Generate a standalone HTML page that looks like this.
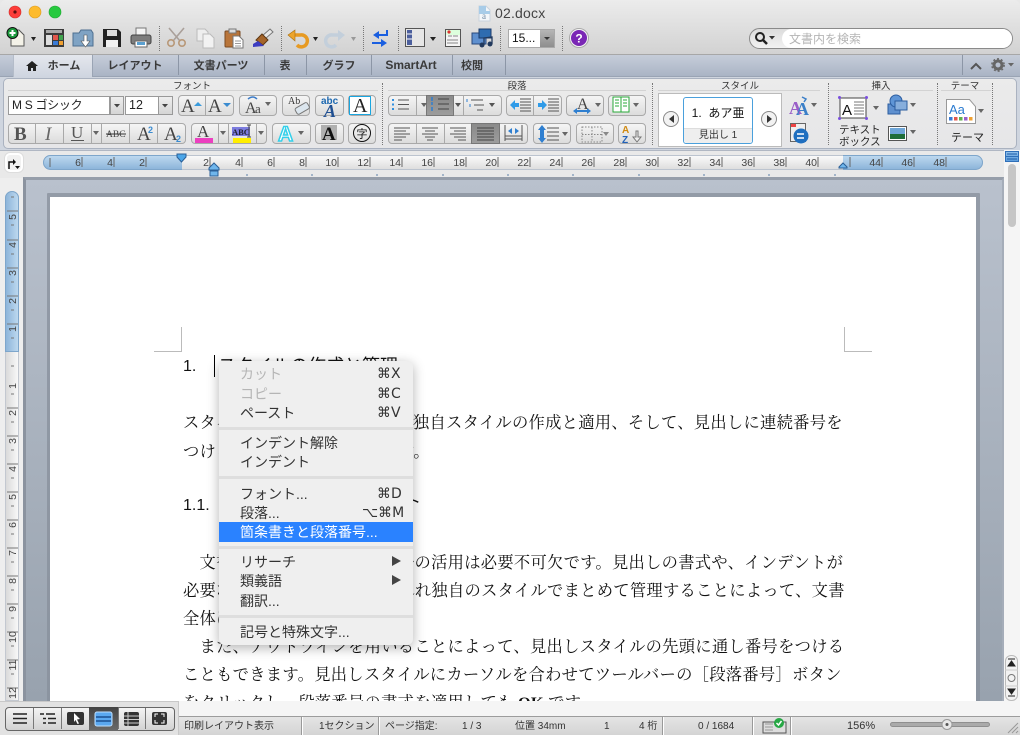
<!DOCTYPE html>
<html lang="ja"><head><meta charset="utf-8"><title>02.docx</title>
<style>
html,body{margin:0;padding:0;background:#fff}
#w{position:relative;width:1020px;height:735px;overflow:hidden;background:#e8e8e8;font-family:"Liberation Sans","Noto Sans CJK JP",sans-serif;color:#333}
#w div{position:absolute;box-sizing:border-box}
.b{background:linear-gradient(#f5f5f5,#dcdcdc);border:1px solid #a9a9a9;border-radius:4px;height:21px}
.d{width:1px;background:#a9a9a9;height:21px}
.dk{background:linear-gradient(#8a8a8a,#9c9c9c);height:21px;border:1px solid #777}
.sep{width:0;border-left:1px dotted #777}
.tab{top:58px;font-size:11px;font-weight:bold;color:#3a3a3a;text-align:center;line-height:15px;white-space:nowrap}
.tv{top:55px;width:1px;height:20px;background:#8c96a6}
.gl{top:81px;font-size:9.5px;color:#333;line-height:12px;text-align:center;white-space:nowrap}
.st{top:719px;font-size:10px;line-height:15px;color:#333;white-space:nowrap}
.sv{top:717px;width:2px;height:18px;background:#fff;border-left:1px solid #999}
.l{left:183px;width:680px;font-family:"Liberation Serif","Noto Serif CJK SC",serif;font-size:16.3px;letter-spacing:.28px;line-height:20px;color:#111;white-space:nowrap}
.m{left:240px;font-size:14px;line-height:18px;color:#333;white-space:nowrap}
.g{color:#b5b5b5}
.k{font-size:14px;line-height:18px;color:#333;white-space:nowrap;font-family:"DejaVu Sans","Liberation Sans",sans-serif}
.ms{left:0;width:194px;height:3px;background:#dedede}
</style></head><body>
<div id="w">
<!-- title and toolbar -->
<div style="left:0;top:0;width:1020px;height:54px;background:linear-gradient(#ececec,#d2d2d2);border-radius:6px 6px 0 0"></div>
<div style="left:495px;top:4px;font-size:14px;line-height:18px;color:#444;letter-spacing:.2px">02.docx</div>
<div class="sep" style="left:159px;top:26px;height:25px"></div>
<div class="sep" style="left:281px;top:26px;height:25px"></div>
<div class="sep" style="left:363px;top:26px;height:25px"></div>
<div class="sep" style="left:398px;top:26px;height:25px"></div>
<div class="sep" style="left:500px;top:26px;height:25px"></div>
<div class="sep" style="left:562px;top:26px;height:25px"></div>
<div style="left:508px;top:29px;width:47px;height:19px;background:#fff;border:1px solid #aaa;font-size:12px;line-height:17px;padding-left:3px;color:#111">15...</div>
<div style="left:540px;top:30px;width:14px;height:17px;background:linear-gradient(#b5b5b5,#8e8e8e)"></div>
<div style="left:749px;top:28px;width:264px;height:21px;border:1px solid #8a8a8a;border-radius:11px;background:linear-gradient(#dcdcdc,#f2f2f2)"></div>
<div style="left:782px;top:29px;width:230px;height:19px;border-radius:10px;background:#fff"></div>
<div style="left:789px;top:31px;font-size:12px;line-height:16px;color:#b5b5b5">文書内を検索</div>

<!-- tabs -->
<div style="left:0;top:54px;width:1020px;height:23px;background:linear-gradient(#c6cdd9,#aab4c5);border-top:1px solid #a7a7a7;border-bottom:1px solid #9aa4b4"></div>
<div style="left:13px;top:55px;width:80px;height:22px;background:linear-gradient(#e4e7ed,#cfd5e0);border-right:1px solid #9aa4b4;border-left:1px solid #b4bcc9"></div>
<div class="tab" style="left:46px;width:36px;top:59px">ホーム</div>
<div class="tab" style="left:105px;width:60px;top:59px">レイアウト</div>
<div class="tab" style="left:190px;width:62px;top:59px">文書パーツ</div>
<div class="tab" style="left:275px;width:20px;top:59px">表</div>
<div class="tab" style="left:322px;width:34px;top:59px">グラフ</div>
<div class="tab" style="left:381px;width:60px;top:58px;font-size:12px">SmartArt</div>
<div class="tab" style="left:460px;width:24px;top:59px">校閲</div>
<div class="tv" style="left:178px"></div><div class="tv" style="left:264px"></div><div class="tv" style="left:306px"></div><div class="tv" style="left:371px"></div><div class="tv" style="left:452px"></div><div class="tv" style="left:505px"></div><div class="tv" style="left:962px"></div>

<!-- ribbon -->
<div style="left:0;top:77px;width:1020px;height:73px;background:#cfd5df"></div>
<div style="left:3px;top:78px;width:1014px;height:71px;border:1px solid #aab2c0;border-radius:5px;background:linear-gradient(#ebebeb,#e6e6e8)"></div>
<div style="left:8px;top:90px;width:370px;height:1px;background:#d3d3d3"></div>
<div style="left:388px;top:90px;width:258px;height:1px;background:#d3d3d3"></div>
<div style="left:658px;top:90px;width:162px;height:1px;background:#d3d3d3"></div>
<div style="left:830px;top:90px;width:103px;height:1px;background:#d3d3d3"></div>
<div style="left:941px;top:90px;width:50px;height:1px;background:#d3d3d3"></div>
<div class="gl" style="left:165px;width:54px">フォント</div>
<div class="gl" style="left:497px;width:40px">段落</div>
<div class="gl" style="left:715px;width:50px">スタイル</div>
<div class="gl" style="left:865px;width:32px">挿入</div>
<div class="gl" style="left:945px;width:40px">テーマ</div>
<div class="sep" style="left:382px;top:83px;height:62px"></div>
<div class="sep" style="left:652px;top:83px;height:62px"></div>
<div class="sep" style="left:828px;top:83px;height:62px"></div>
<div class="sep" style="left:937px;top:83px;height:62px"></div>
<div class="sep" style="left:992px;top:83px;height:62px"></div>

<!-- font group row 1 -->
<div style="left:8px;top:96px;width:102px;height:19px;background:#fff;border:1px solid #999;font-size:12px;line-height:17px;padding-left:3px;color:#222;letter-spacing:-.3px;white-space:nowrap">M S ゴシック</div>
<div style="left:110px;top:96px;width:14px;height:19px;background:linear-gradient(#eee,#d5d5d5);border:1px solid #999"></div>
<div style="left:125px;top:96px;width:34px;height:19px;background:#fff;border:1px solid #999;font-size:12.5px;line-height:17px;padding-left:3px;color:#222">12</div>
<div style="left:158px;top:96px;width:15px;height:19px;background:linear-gradient(#eee,#d5d5d5);border:1px solid #999"></div>
<div class="b" style="left:178px;top:95px;width:56px"></div><div class="d" style="left:205px;top:95px"></div>
<div class="b" style="left:239px;top:95px;width:38px"></div>
<div class="b" style="left:282px;top:95px;width:28px"></div>
<div class="b" style="left:315px;top:95px;width:29px"></div>
<div class="b" style="left:348px;top:95px;width:28px"></div>
<!-- font group row 2 -->
<div class="b" style="left:8px;top:123px;width:178px"></div>
<div class="d" style="left:35px;top:123px"></div><div class="d" style="left:63px;top:123px"></div><div class="d" style="left:91px;top:123px"></div><div class="d" style="left:101px;top:123px"></div><div class="d" style="left:129px;top:123px"></div><div class="d" style="left:157px;top:123px"></div>
<div class="b" style="left:191px;top:123px;width:76px"></div>
<div class="d" style="left:218px;top:123px"></div><div class="d" style="left:228px;top:123px"></div><div class="d" style="left:256px;top:123px"></div>
<div class="b" style="left:272px;top:123px;width:39px"></div>
<div class="b" style="left:315px;top:123px;width:29px"></div>
<div class="b" style="left:348px;top:123px;width:28px"></div>
<!-- paragraph -->
<div class="b" style="left:388px;top:95px;width:114px"></div>
<div class="dk" style="left:426px;top:95px;width:28px"></div>
<div class="d" style="left:416px;top:95px"></div><div class="d" style="left:463px;top:95px"></div>
<div class="b" style="left:506px;top:95px;width:56px"></div><div class="d" style="left:533px;top:95px"></div>
<div class="b" style="left:566px;top:95px;width:38px"></div>
<div class="b" style="left:608px;top:95px;width:38px"></div>
<div class="b" style="left:388px;top:123px;width:140px"></div>
<div class="dk" style="left:471px;top:123px;width:29px"></div>
<div class="d" style="left:416px;top:123px"></div><div class="d" style="left:444px;top:123px"></div>
<div class="b" style="left:533px;top:123px;width:38px"></div>
<div class="b" style="left:576px;top:123px;width:38px"></div>
<div class="b" style="left:618px;top:123px;width:28px"></div>
<!-- styles -->
<div style="left:658px;top:93px;width:124px;height:54px;background:#fff;border:1px solid #bbb"></div>
<div style="left:683px;top:97px;width:70px;height:47px;background:#fff;border:1px solid #4aa0dc;border-radius:3px"></div>
<div style="left:684px;top:128px;width:68px;height:15px;background:#eee;border-top:1px solid #ddd;font-size:10px;line-height:14px;text-align:center;color:#333;border-radius:0 0 3px 3px">見出し 1</div>
<div style="left:684px;top:104px;width:68px;text-align:center;font-size:12px;line-height:18px;color:#111">1.&nbsp; あア亜</div>
<div style="left:839px;top:125px;font-size:10.5px;line-height:11.5px;color:#222;white-space:nowrap">テキスト<br>ボックス</div>
<div style="left:951px;top:131px;font-size:11px;line-height:14px;color:#222">テーマ</div>

<!-- ruler row -->
<div style="left:0;top:150px;width:1020px;height:28px;background:#e9e9e9;border-top:1px solid #b0b7c3"></div>
<div style="left:5px;top:153px;width:18px;height:19px;background:#f1f1f1;border:2px solid #fff;border-radius:5px;box-shadow:0 0 0 1px #ddd"></div>
<div style="left:43px;top:155px;width:940px;height:15px;border-radius:8px;background:linear-gradient(#f9f9f9,#dedede);border:1px solid #bcc4cf"></div>
<div style="left:43px;top:155px;width:139px;height:15px;border-radius:8px 0 0 8px;background:linear-gradient(#bdd8ef,#8db5da);border:1px solid #7ea6cb;border-right:0"></div>
<div style="left:843px;top:155px;width:140px;height:15px;border-radius:0 8px 8px 0;background:linear-gradient(#bdd8ef,#8db5da);border:1px solid #7ea6cb;border-left:0"></div>

<!-- document area -->
<div style="left:23px;top:177px;width:981px;height:524px;background:linear-gradient(#b9c1cd,#98a2ae);border-left:3px solid #8b939f;border-top:3px solid #969eaa;border-right:2px solid #a5adb9"></div>
<div style="left:47px;top:193px;width:933px;height:508px;background:#878f9b;border-radius:1px 1px 0 0;opacity:.75"></div>
<div style="left:50px;top:197px;width:926px;height:504px;background:#fff;overflow:hidden">
 <div style="left:104px;top:130px;width:28px;height:25px;border-right:1px solid #bbb;border-bottom:1px solid #bbb"></div>
 <div style="left:794px;top:130px;width:28px;height:25px;border-left:1px solid #bbb;border-bottom:1px solid #bbb"></div>
</div>
<div style="left:0;top:178px;width:23px;height:523px;background:#eee"></div>
<div style="left:1004px;top:150px;width:16px;height:551px;background:#f5f5f5"></div>
<div style="left:1008px;top:164px;width:8px;height:63px;border-radius:4px;background:#c6c6c6"></div>
<div style="left:1005px;top:151px;width:14px;height:11px;background:linear-gradient(#8cbdea,#5d9ddc);border:1px solid #2f6fb8"></div>
<div style="left:1005px;top:156px;width:14px;height:1px;background:#2f6fb8"></div>
<!-- vertical ruler -->
<div style="left:5px;top:191px;width:14px;height:510px;background:linear-gradient(90deg,#dadada,#f8f8f8);border:1px solid #c3c8d0;border-radius:7px 7px 0 0"></div>
<div style="left:5px;top:191px;width:14px;height:161px;background:linear-gradient(90deg,#8db5da,#bdd8ef);border:1px solid #7ea6cb;border-radius:7px 7px 0 0"></div>

<!-- body text -->
<div class="l" style="top:357px;letter-spacing:0;font-size:16px;font-family:'Liberation Sans',sans-serif">1.</div>
<div class="l" style="left:218px;top:356px;letter-spacing:0;font-size:18px;font-family:'Liberation Sans','Noto Sans CJK JP',sans-serif">スタイルの作成と管理</div>
<div style="left:214px;top:355px;width:1px;height:22px;background:#000"></div>
<div class="l" style="top:413px">スタイルについて説明します、独自スタイルの作成と適用、そして、見出しに連続番号を</div>
<div class="l" style="top:442px">つけることについて説明します。</div>
<div class="l" style="top:496px;letter-spacing:0;font-size:16px;font-family:'Liberation Sans',sans-serif">1.1.</div>
<div class="l" style="left:405px;top:493px;letter-spacing:0;font-size:16px;font-family:'Liberation Sans','Noto Sans CJK JP',sans-serif">ト</div>
<div class="l" style="top:553px">　文書作成においてはスタイルの活用は必要不可欠です。見出しの書式や、インデントが</div>
<div class="l" style="top:581px">必要な書式を、それぞれをそれれ独自のスタイルでまとめて管理することによって、文書</div>
<div class="l" style="top:609px">全体に統一感を持たせます。</div>
<div class="l" style="top:637px">　また、アウトラインを用いることによって、見出しスタイルの先頭に通し番号をつける</div>
<div class="l" style="top:665px">こともできます。見出しスタイルにカーソルを合わせてツールバーの［段落番号］ボタン</div>
<div class="l" style="top:693px">をクリックし、段落番号の書式を適用しても <b style="font-weight:bold">OK</b> です。</div>

<!-- bottom bars -->
<div style="left:0;top:701px;width:1020px;height:15px;background:#f5f5f5"></div>
<div style="left:0;top:716px;width:1020px;height:19px;background:linear-gradient(#e4e4e4,#d4d4d4);border-top:1px solid #9c9c9c"></div>
<div style="left:0;top:701px;width:179px;height:34px;background:#e2e2e2;border-top:1px solid #c8c8c8;border-right:1px solid #c8c8c8"></div>
<div style="left:5px;top:707px;width:170px;height:24px;border:1px solid #666;border-radius:4px;background:linear-gradient(#f4f4f4,#d2d2d2)"></div>
<div style="left:89px;top:707px;width:29px;height:24px;background:linear-gradient(#444,#6a6a6a)"></div>
<div class="d" style="left:33px;top:708px;background:#777"></div><div class="d" style="left:61px;top:708px;background:#777"></div><div class="d" style="left:145px;top:708px;background:#777"></div><div class="d" style="left:118px;top:708px;background:#777"></div>
<div class="st" style="left:184px">印刷レイアウト表示</div>
<div class="sv" style="left:301px"></div>
<div class="st" style="left:319px">1セクション</div>
<div class="sv" style="left:378px"></div>
<div class="st" style="left:385px">ページ指定:</div>
<div class="st" style="left:462px">1 / 3</div>
<div class="st" style="left:515px">位置 34mm</div>
<div class="st" style="left:604px">1</div>
<div class="st" style="left:639px">4 桁</div>
<div class="sv" style="left:662px"></div>
<div class="st" style="left:698px">0 / 1684</div>
<div class="sv" style="left:752px"></div>
<div class="sv" style="left:790px"></div>
<div class="st" style="left:847px;font-size:11px">156%</div>
<div style="left:890px;top:722px;width:100px;height:5px;border-radius:3px;background:#aaa;border:1px solid #8f8f8f"></div>
<div style="left:1005px;top:655px;width:13px;height:46px;background:#f2f2f2;border:1px solid #bbb;border-radius:6px"></div>

<!-- icon overlay -->
<svg style="position:absolute;left:0;top:0" width="1020" height="735" viewBox="0 0 1020 735" font-family="Liberation Sans, Noto Sans CJK JP, sans-serif">
<!-- traffic lights -->
<circle cx="15" cy="12" r="6" fill="#fc3d39" stroke="#d32e2a" stroke-width=".6"/><circle cx="15" cy="12" r="1.6" fill="#5a0f0d"/>
<circle cx="35" cy="12" r="6" fill="#fdbb2d" stroke="#dc9c1f" stroke-width=".6"/>
<circle cx="55" cy="12" r="6" fill="#27c93f" stroke="#1fa832" stroke-width=".6"/>
<!-- title doc -->
<path d="M479 6h7l4 4v11h-11z" fill="#f3f6f9" stroke="#c9d3dd"/><path d="M479 6h7v5h4v3h-11z" fill="#a8cce8"/><text x="482" y="19" font-size="9" fill="#6e8aa2" font-family="Liberation Serif">a</text>
<!-- new -->
<path d="M11 30h8l5 5v11H11z" fill="#f4f2e8" stroke="#555"/><circle cx="12.500" cy="33" r="5.500" fill="#1c9a3c" stroke="#111"/><path d="M12.500 30v6M9.500 33h6" stroke="#fff" stroke-width="2"/>
<path d="M31 37h5l-2.500 4z" fill="#222"/>
<!-- gallery -->
<rect x="44" y="29" width="20" height="18" fill="#3b3b3b"/><rect x="46" y="35" width="6" height="10" fill="#ddd"/><rect x="53" y="35" width="5" height="5" fill="#e2574c"/><rect x="59" y="35" width="4" height="5" fill="#3fa34d"/><rect x="53" y="41" width="5" height="4" fill="#3a7bd5"/><rect x="59" y="41" width="4" height="4" fill="#f0a030"/><rect x="46" y="30" width="16" height="3" fill="#aaa"/>
<!-- open -->
<path d="M73 33h6l2-3h10l2 3v13H73z" fill="#7fa3c4" stroke="#4e6f90"/><path d="M84 35v6h-3l4.500 6 4.500-6h-3v-6z" fill="#fff" stroke="#555" stroke-width=".6"/>
<!-- save -->
<path d="M103 29h15l3 3v15h-18z" fill="#222"/><rect x="107" y="30" width="10" height="6" fill="#ddd"/><rect x="106" y="40" width="12" height="7" fill="#f0f0f0"/>
<!-- print -->
<rect x="136" y="28" width="10" height="8" fill="#f5f5f5" stroke="#777"/><rect x="131" y="35" width="20" height="9" rx="2" fill="#7d7d7d" stroke="#444"/><rect x="135" y="41" width="12" height="6" fill="#fff" stroke="#666"/><rect x="137" y="42" width="8" height="3" fill="#5aa0d0"/>
<!-- cut -->
<g stroke="#aaa09a" stroke-width="1.600" fill="none"><path d="M169 28l11 13M184 28l-11 13"/><circle cx="171" cy="43" r="3.200" stroke="#b89878"/><circle cx="182" cy="43" r="3.200" stroke="#b89878"/></g>
<!-- copy -->
<path d="M197 29h8l3 3v9h-11z" fill="#eee" stroke="#bbb"/><path d="M203 34h7l4 4v10h-11z" fill="#f2f2f2" stroke="#bbb"/>
<!-- paste -->
<rect x="225" y="31" width="15" height="16" rx="1" fill="#b9753a" stroke="#7a4a22"/><rect x="229" y="29" width="7" height="4" fill="#ddd" stroke="#777"/><path d="M233 36h6l4 4v8h-10z" fill="#fff" stroke="#777"/><path d="M235 41h6M235 43.500h6M235 46h6" stroke="#999"/>
<!-- brush -->
<path d="M270 29l3 3-8 7-3-3z" fill="#e8e8e8" stroke="#777"/><path d="M262 34l6 6-5 5-7-5z" fill="#a5652a" stroke="#5c3713"/><path d="M253 44l5-3 6 5-11 1z" fill="#3c3cc0"/>
<!-- undo -->
<path d="M291 35h9a6 6 0 1 1-3 10" fill="none" stroke="#e79a22" stroke-width="3.500"/><path d="M295 30l-7 5 7 6z" fill="#eda52c" stroke="#a86f12" stroke-width=".6"/>
<path d="M313 37h5l-2.500 4z" fill="#222"/>
<path d="M342 35h-9a6 6 0 1 0 3 10" fill="none" stroke="#c3cfdb" stroke-width="3.500"/><path d="M338 30l7 5-7 6z" fill="#c3cfdb"/>
<path d="M351 37h5l-2.500 4z" fill="#999"/>
<!-- arrows -->
<path d="M387 30v5h-10" fill="none" stroke="#1a5fe0" stroke-width="2"/><path d="M379 31l-6 4 6 4z" fill="#1a5fe0"/><path d="M372 43h10" stroke="#1a5fe0" stroke-width="2"/><path d="M381 39l6 4-6 4z" fill="#1a5fe0"/>
<!-- sidebar -->
<rect x="405.500" y="28.500" width="19" height="18" fill="#e6e6e6" stroke="#555"/><rect x="407" y="30" width="5" height="15" fill="#4c5f9d"/><path d="M407 34h5M407 39h5" stroke="#fff"/>
<path d="M430 37h6l-3 4z" fill="#222"/>
<!-- toolbox -->
<rect x="445.500" y="29.500" width="15" height="17" fill="#f5f5f5" stroke="#555"/><rect x="446" y="30" width="14" height="5" fill="#dfd"/><circle cx="449" cy="32" r="1.600" fill="#d33"/><path d="M448 36h4M453 36h5M447 40h11M447 43h11" stroke="#888"/>
<!-- media -->
<rect x="472" y="33" width="14" height="11" fill="#5f90cf" stroke="#29497c"/><rect x="479" y="29" width="12" height="9" fill="#2e6cb0" stroke="#1c3c6c"/><circle cx="482" cy="45" r="2.500" fill="#223a5e"/><circle cx="490" cy="44" r="2.500" fill="#223a5e"/><path d="M484 45v-7l8-1v7" fill="none" stroke="#223a5e" stroke-width="1.300"/>
<!-- combo arrow -->
<path d="M544 37h6l-3 3z" fill="#333"/>
<!-- help -->
<circle cx="579" cy="38" r="9.500" fill="#f5f5f5" stroke="#aaa"/><circle cx="579" cy="38" r="8" fill="#7a27b5"/><text x="579" y="42.500" font-size="12" font-weight="bold" fill="#fff" text-anchor="middle">?</text>
<!-- search -->
<circle cx="760" cy="37" r="4" fill="none" stroke="#222" stroke-width="2"/><path d="M763 40l4 4" stroke="#222" stroke-width="2.500"/><path d="M769 36h6l-3 3.500z" fill="#333"/>
<!-- tab icons -->
<path d="M32 61l6 5h-2v5h-3v-3h-2v3h-3v-5h-2z" fill="#222"/>
<path d="M971 69l5-5 5 5" fill="none" stroke="#555" stroke-width="2"/>
<circle cx="998" cy="65" r="4" fill="none" stroke="#666" stroke-width="3"/><circle cx="998" cy="65" r="6.200" fill="none" stroke="#666" stroke-width="1.400" stroke-dasharray="2 2"/><path d="M1008 63h6l-3 3.500z" fill="#666"/>
<!-- combos arrows -->
<path d="M114 104h6l-3 3.500z" fill="#444"/><path d="M162 104h6l-3 3.500z" fill="#444"/>
<!-- font buttons row 1 -->
<g font-family="Liberation Serif" fill="#444">
<text x="181" y="112" font-size="19">A</text><path d="M194 106l4-4 4 4z" fill="#3a9bdc"/>
<text x="208" y="112" font-size="19">A</text><path d="M223 103h8l-4 4z" fill="#3a8bd0"/>
<text x="245" y="113" font-size="16">A</text><text x="255" y="113" font-size="13">a</text><path d="M248 99q5-4 9 0" fill="none" stroke="#3a7bc8" stroke-width="1.500"/><path d="M265 102h6l-3 4z" fill="#666"/>
<text x="288" y="104" font-size="10" fill="#333">Ab</text><rect x="295" y="105" width="14" height="7" rx="2" transform="rotate(-30 302 108)" fill="#dce6ee" stroke="#777"/>
<text x="321" y="104" font-size="10" font-weight="bold" fill="#1d68b0" font-family="Liberation Sans">abc</text><text x="324" y="117" font-size="18" font-style="italic" font-weight="bold" fill="#1f4f92">A</text>
<rect x="349.500" y="96.500" width="21" height="18" fill="#fff" stroke="#1aa6e0"/><text x="353" y="112" font-size="20" fill="#222">A</text>
</g>
<!-- font buttons row 2 -->
<g font-family="Liberation Serif">
<text x="14" y="140" font-size="19" font-weight="bold" fill="#555">B</text>
<text x="45" y="140" font-size="19" font-style="italic" fill="#666">I</text>
<text x="71" y="138" font-size="17" fill="#555">U</text><path d="M71 140.500h13" stroke="#555"/>
<path d="M93 131h6l-3 4z" fill="#666"/>
<text x="106" y="137" font-size="9.500" fill="#444">ABC</text><path d="M106 134h20" stroke="#333"/>
<text x="137" y="140" font-size="19" fill="#444">A</text><text x="148" y="133" font-size="9" font-weight="bold" fill="#3a8bd0" font-family="Liberation Sans">2</text>
<text x="164" y="140" font-size="19" fill="#444">A</text><text x="176" y="142" font-size="9" font-weight="bold" fill="#3a8bd0" font-family="Liberation Sans">2</text>
<text x="197" y="137" font-size="17" fill="#444">A</text><rect x="195" y="138" width="18" height="5" fill="#ec3fc0"/>
<path d="M220 131h6l-3 4z" fill="#666"/>
<rect x="232" y="127" width="18" height="9" fill="#7c7cdf"/><text x="232" y="135" font-size="8.500" font-weight="bold" fill="#223">ABC</text><rect x="233" y="138" width="18" height="5" fill="#ffee00"/><path d="M249 125v12M247 125h4M247 137h4" stroke="#444"/>
<path d="M258 131h6l-3 4z" fill="#666"/>
<text x="278" y="141" font-size="21" font-weight="bold" fill="#fff" stroke="#33d0ea" stroke-width="1.500" font-family="Liberation Sans">A</text><path d="M298 131h6l-3 4z" fill="#666"/>
<rect x="321" y="125" width="16" height="15" fill="#b0b0b0"/><text x="322" y="140" font-size="19" font-weight="bold" fill="#111">A</text>
<circle cx="362" cy="133" r="8.500" fill="none" stroke="#111"/><text x="362" y="137.500" font-size="11" fill="#111" text-anchor="middle" font-family="Noto Sans CJK JP">字</text>
</g>
<!-- paragraph icons -->
<g stroke="#555" fill="none">
<path d="M398 100h11M398 104.500h11M398 109h11"/><path d="M393 99v2M393 103.500v2M393 108v2" stroke="#2f8fe0" stroke-width="2"/>
<path d="M438 99h11M438 104h11M438 109h11" stroke="#444"/><path d="M432 97v4M432 102v3M432 107v4" stroke="#2f7fd0" stroke-width="1.500"/>
<path d="M471 100h12M474 105h10M477 110h6"/><path d="M467 99v3M470 104v3" stroke="#2f7fd0"/>
<path d="M520 99h11M520 102h11M520 105h11M520 108h11M520 111h11"/>
<path d="M548 99h11M548 102h11M548 105h11M548 108h11M548 111h11" />
<path d="M394 128h16M394 131h12M394 134h16M394 137h12M394 140h8"/>
<path d="M422 128h16M425 131h10M422 134h16M425 137h10M427 140h6"/>
<path d="M450 128h16M454 131h12M450 134h16M454 137h12M458 140h8"/>
<path d="M477 128h17M477 131h17M477 134h17M477 137h17M477 140h17" stroke="#444"/>
<path d="M505 125v16M522 125v16M505 136h17M505 139h17"/>
<path d="M547 128h12M547 132h12M547 136h12M547 140h12"/>
<path d="M582 127h20v15h-20zM592 127v15M582 134.500h20" stroke-dasharray="1.500 1.500" stroke="#888"/>
</g>
<path d="M421 103h6l-3 4z" fill="#666"/><path d="M455 103h6l-3 4z" fill="#555"/><path d="M489 103h6l-3 4z" fill="#555"/>
<path d="M510 105l5-5v10zM515 103h4v4h-4z" fill="#2f9be8"/><path d="M538 103h4v4h-4zM542 100l5 5-5 5z" fill="#2f9be8"/>
<g fill="#2f7fd0"><path d="M573 111l4-3v6zM591 111l-4-3v6zM577 110h10v2h-10z"/><path d="M542 125l-4 5h8zM542 143l-4-5h8z"/><path d="M540 130h4v8h-4z"/></g>
<text x="577" y="109" font-size="16" fill="#444" font-family="Liberation Serif">A</text>
<path d="M595 103h6l-3 4z" fill="#666"/><path d="M562 132h6l-3 4z" fill="#666"/><path d="M603 132h6l-3 4z" fill="#888"/><path d="M633 103h6l-3 4z" fill="#666"/>
<rect x="613" y="97" width="16" height="15" fill="#fff" stroke="#29a83a"/><path d="M621 97v15M615 100h4M615 103h4M615 106h4M623 100h4M623 103h4M623 106h4" stroke="#29a83a"/>
<text x="622" y="133" font-size="10" font-weight="bold" fill="#d08a12">A</text><text x="622" y="143" font-size="10" font-weight="bold" fill="#2261b8">Z</text><path d="M636 131v6h-3l4 5 4-5h-3v-6z" fill="#eee" stroke="#777"/>
<path d="M508 130l4-3v6zM519 130l-4-3v6z" fill="#2f7fd0" transform="translate(0 1)"/>
<!-- styles arrows -->
<circle cx="671" cy="119" r="7.500" fill="#f2f2f2" stroke="#888"/><path d="M674 115v8l-5-4z" fill="#333"/>
<circle cx="769" cy="119" r="7.500" fill="#f2f2f2" stroke="#888"/><path d="M767 115v8l5-4z" fill="#333"/>
<text x="789" y="114" font-size="18" font-weight="bold" fill="#9a5ec8" font-family="Liberation Serif">A</text><text x="796" y="115" font-size="18" font-weight="bold" fill="#3a7fc8" font-family="Liberation Serif">A</text><path d="M802 97l4 2-2 3" fill="none" stroke="#3a7fc8" stroke-width="1.500"/><path d="M811 103h6l-3 4z" fill="#666"/>
<rect x="790.500" y="123.500" width="15" height="18" fill="#eee" stroke="#666"/><rect x="791" y="124" width="5" height="3" fill="#e44"/><circle cx="801" cy="136" r="7.500" fill="#1f6fc0"/><path d="M797 134h7M804 138h-7" stroke="#fff" stroke-width="1.600"/>
<!-- insert -->
<rect x="840" y="98" width="26" height="20" fill="#fff" stroke="#444"/><text x="842" y="115" font-size="15" font-family="Liberation Sans" fill="#111">A</text><path d="M854 102h10M854 105h10M854 108h10M854 111h10M854 114h10" stroke="#777"/>
<g fill="#7a4fe0"><circle cx="839.500" cy="97.500" r="1.500"/><circle cx="866.500" cy="97.500" r="1.500"/><circle cx="839.500" cy="118.500" r="1.500"/><circle cx="866.500" cy="118.500" r="1.500"/></g>
<path d="M873 106h6l-3 4z" fill="#666"/>
<rect x="888" y="104" width="12" height="10" fill="#5f90cf" stroke="#2c5d9f"/><circle cx="896" cy="101" r="6" fill="#5f95d6" stroke="#2c5d9f"/><rect x="895" y="101" width="12" height="9" fill="#87aedc" stroke="#2c5d9f"/><path d="M910 103h6l-3 4z" fill="#666"/>
<rect x="888.500" y="126.500" width="18" height="14" fill="#fff" stroke="#555"/><rect x="890" y="128" width="15" height="7" fill="#6ea6d8"/><rect x="890" y="134" width="15" height="5" fill="#1f6e3a"/><path d="M910 130h6l-3 4z" fill="#666"/>
<!-- theme -->
<path d="M946.500 99.500h23l6 7v17h-29z" fill="#fff" stroke="#999"/><text x="949" y="114" font-size="13" fill="#2a7ad0" font-family="Liberation Sans">Aa</text>
<g><rect x="949" y="117" width="3.500" height="3.500" fill="#3a7bd5"/><rect x="954" y="117" width="3.500" height="3.500" fill="#e2574c"/><rect x="959" y="117" width="3.500" height="3.500" fill="#5fb04d"/><rect x="964" y="117" width="3.500" height="3.500" fill="#9a5ec8"/><rect x="969" y="117" width="3.500" height="3.500" fill="#f0a030"/></g>
<path d="M978 109h6l-3 4z" fill="#666"/>
<!-- tab selector -->
<path d="M9 169v-7h4" fill="none" stroke="#111" stroke-width="1.500"/><path d="M13 159l3 3-3 3z" fill="#111"/><path d="M15 166h5l-2.500 3z" fill="#111"/>
<!-- ruler ticks + labels -->
<g stroke="#666"><path d="M50 158v9M82 157v10M114 157v10M146 157v10M210 157v10M242 157v10M274 157v10M306 157v10M338 157v10M370 157v10M402 157v10M434 157v10M466 157v10M498 157v10M530 157v10M562 157v10M594 157v10M626 157v10M658 157v10M690 157v10M722 157v10M754 157v10M786 157v10M818 157v10M850 157v10M882 157v10M914 157v10M946 157v10"/></g>
<g font-size="10.500" fill="#444" text-anchor="end">
<text x="81" y="166">6</text><text x="113" y="166">4</text><text x="145" y="166">2</text><text x="209" y="166">2</text><text x="241" y="166">4</text><text x="273" y="166">6</text><text x="305" y="166">8</text><text x="337" y="166">10</text><text x="369" y="166">12</text><text x="401" y="166">14</text><text x="433" y="166">16</text><text x="465" y="166">18</text><text x="497" y="166">20</text><text x="529" y="166">22</text><text x="561" y="166">24</text><text x="593" y="166">26</text><text x="625" y="166">28</text><text x="657" y="166">30</text><text x="689" y="166">32</text><text x="721" y="166">34</text><text x="753" y="166">36</text><text x="785" y="166">38</text><text x="817" y="166">40</text><text x="881" y="166">44</text><text x="913" y="166">46</text><text x="945" y="166">48</text>
</g>
<path d="M247 174v2M312 174v2M377 174v2M443 174v2M508 174v2M573 174v2M639 174v2M704 174v2M769 174v2M835 174v2" stroke="#5a7fa8"/>
<path d="M177 154h9v3l-4.500 5-4.500-5z" fill="#4ca6e8" stroke="#2b5f96"/>
<path d="M209 168l5-5 5 5v2h-10z" fill="#6fb6ec" stroke="#2b5f96"/><rect x="210" y="171" width="8" height="5" fill="#6fb6ec" stroke="#2b5f96"/>
<path d="M839 167l4-4 4 4v1h-8z" fill="#6fb6ec" stroke="#2b5f96"/>
<!-- vertical ruler -->
<path d="M7 211h11M7 240h11M7 268h11M7 296h11M7 324h11M7 408h11M7 436h11M7 464h11M7 492h11M7 520h11M7 548h11M7 576h11M7 604h11M7 632h11M7 660h11M7 688h11" stroke="#777"/>
<path d="M11 197h3M11 225h3M11 254h3M11 282h3M11 310h3M11 338h3M11 366h3M11 394h3M11 422h3M11 450h3M11 478h3M11 506h3M11 534h3M11 562h3M11 590h3M11 618h3M11 646h3M11 674h3" stroke="#777"/>
<g font-size="10.500" fill="#444" text-anchor="middle">
<text transform="translate(16 217) rotate(-90)">5</text><text transform="translate(16 245) rotate(-90)">4</text><text transform="translate(16 273) rotate(-90)">3</text><text transform="translate(16 301) rotate(-90)">2</text><text transform="translate(16 329) rotate(-90)">1</text>
<text transform="translate(16 386) rotate(-90)">1</text><text transform="translate(16 413) rotate(-90)">2</text><text transform="translate(16 441) rotate(-90)">3</text><text transform="translate(16 469) rotate(-90)">4</text><text transform="translate(16 497) rotate(-90)">5</text><text transform="translate(16 525) rotate(-90)">6</text><text transform="translate(16 553) rotate(-90)">7</text><text transform="translate(16 581) rotate(-90)">8</text><text transform="translate(16 609) rotate(-90)">9</text><text transform="translate(16 637) rotate(-90)">10</text><text transform="translate(16 665) rotate(-90)">11</text><text transform="translate(16 693) rotate(-90)">12</text>
</g>
<!-- view buttons -->
<path d="M13 714h14M13 718.500h14M13 723h14" stroke="#222" stroke-width="1.600"/>
<path d="M40 714h4M46 714h9M43 718.500h3M48 718.500h8M43 723h3M48 723h8" stroke="#222" stroke-width="1.500"/>
<rect x="67" y="712" width="17" height="13" rx="2" fill="#333"/><path d="M74 713l6 6-3 .5 2 4-1.500 .5-2-4-1.500 2z" fill="#fff"/>
<rect x="95" y="712" width="17" height="14" rx="2" fill="#5aa8f0" stroke="#bfe0ff"/><path d="M96 717h15M96 721h15" stroke="#1a4f90" stroke-width="1.500"/>
<rect x="124" y="712" width="15" height="14" rx="2" fill="#333"/><path d="M124 716h15M124 719.500h15M124 723h15M128 712v14" stroke="#ccc"/>
<rect x="152" y="712" width="15" height="13" rx="2" fill="#333"/><path d="M155 717v-3h3M164 717v-3h-3M155 720v3h3M164 720v3h-3" fill="none" stroke="#fff"/>
<!-- book -->
<path d="M763 722h11l1 1 1-1h10v11h-23z" fill="#ddd" stroke="#555"/><path d="M765 724h8M765 727h8M765 730h8" stroke="#999"/><circle cx="779" cy="723" r="5" fill="#27a845"/><path d="M776.500 723l2 2 3-4" fill="none" stroke="#fff" stroke-width="1.500"/>
<!-- slider -->
<circle cx="947" cy="724.500" r="5" fill="#e8e8e8" stroke="#999"/><circle cx="947" cy="724.500" r="1.500" fill="#555"/>
<path d="M1008 733l10-10M1012 733l6-6M1016 733l2-2" stroke="#999"/>
<!-- scroll nav -->
<path d="M1008 666l3.500-5 3.500 5zM1008 659h7" fill="#222" stroke="#222"/><circle cx="1011.500" cy="678" r="3.500" fill="none" stroke="#777"/><path d="M1008 689l3.500 5 3.500-5zM1008 696h7" fill="#222" stroke="#222"/>
<path d="M1005 670h13M1005 686h13" stroke="#ccc"/>
<path d="M1007 154h10M1007 159h10" stroke="#1f5ea8"/>
</svg>

<!-- context menu -->
<div style="left:219px;top:361px;width:194px;height:284px;background:#efefef;border-radius:6px;box-shadow:0 3px 12px rgba(0,0,0,.3);overflow:hidden;z-index:5">
 <div class="ms" style="top:66px"></div>
 <div class="ms" style="top:115px"></div>
 <div class="ms" style="top:185px"></div>
 <div class="ms" style="top:254px"></div>
 <div style="left:0;top:161px;width:194px;height:20px;background:#2a82ff"></div>
</div>
<div style="z-index:6;left:0;top:0;width:1020px;height:735px">
 <div class="m g" style="top:365px">カット</div><div class="k g" style="left:377px;top:365px">⌘X</div>
 <div class="m g" style="top:385px">コピー</div><div class="k g" style="left:377px;top:385px">⌘C</div>
 <div class="m" style="top:404px">ペースト</div><div class="k" style="left:377px;top:404px">⌘V</div>
 <div class="m" style="top:434px">インデント解除</div>
 <div class="m" style="top:453px">インデント</div>
 <div class="m" style="top:485px">フォント...</div><div class="k" style="left:377px;top:485px">⌘D</div>
 <div class="m" style="top:504px">段落...</div><div class="k" style="left:362px;top:504px">⌥⌘M</div>
 <div class="m" style="top:523px;color:#fff">箇条書きと段落番号...</div>
 <div class="m" style="top:553px">リサーチ</div>
 <div class="m" style="top:572px">類義語</div>
 <div class="m" style="top:592px">翻訳...</div>
 <div class="m" style="top:623px">記号と特殊文字...</div>
 <svg style="position:absolute;left:0;top:0" width="1020" height="735"><path d="M392 556l9 5-9 5zM392 575l9 5-9 5z" fill="#444"/></svg>
</div>
</div>
</body></html>
